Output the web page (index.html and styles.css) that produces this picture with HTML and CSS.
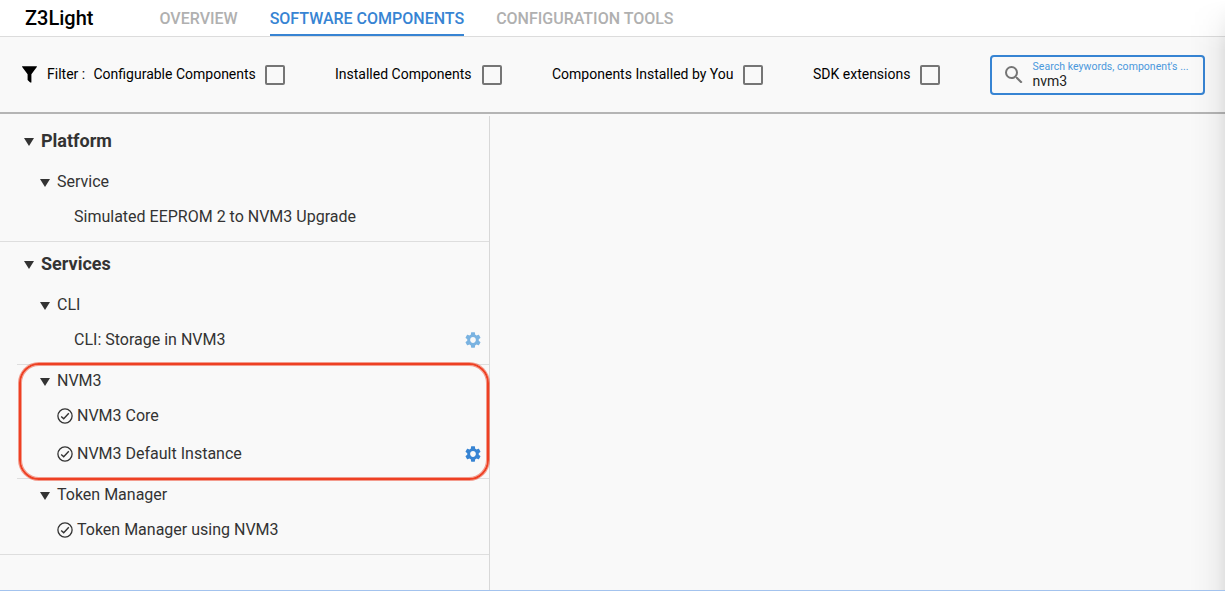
FILE: index.html
```html
<!DOCTYPE html>
<html lang="en">
<head>
<meta charset="utf-8">
<title>Z3Light</title>
<link rel="stylesheet" href="styles.css">
</head>
<body>
<svg class="defs" width="0" height="0" aria-hidden="true">
  <symbol id="gear" viewBox="2 2 20 20"><path d="M19.14 12.94c.04-.3.06-.61.06-.94 0-.32-.02-.64-.07-.94l2.03-1.58c.18-.14.23-.41.12-.61l-1.92-3.32c-.12-.22-.37-.29-.59-.22l-2.39.96c-.5-.38-1.03-.7-1.62-.94l-.36-2.54c-.04-.24-.24-.41-.48-.41h-3.84c-.24 0-.43.17-.47.41l-.36 2.54c-.59.24-1.13.57-1.62.94l-2.39-.96c-.22-.08-.47 0-.59.22L2.74 8.87c-.12.21-.08.47.12.61l2.03 1.58c-.05.3-.09.63-.09.94s.02.64.07.94l-2.03 1.58c-.18.14-.23.41-.12.61l1.92 3.32c.12.22.37.29.59.22l2.39-.96c.5.38 1.03.7 1.62.94l.36 2.54c.05.24.24.41.48.41h3.84c.24 0 .44-.17.47-.41l.36-2.54c.59-.24 1.13-.56 1.62-.94l2.39.96c.22.08.47 0 .59-.22l1.92-3.32c.12-.22.07-.47-.12-.61l-2.01-1.58zM12 15.6c-1.98 0-3.6-1.62-3.6-3.6s1.62-3.6 3.6-3.6 3.6 1.62 3.6 3.6-1.62 3.6-3.6 3.6z"/></symbol>
  <symbol id="check" viewBox="0 0 16 16"><circle cx="8" cy="8" r="7.1" fill="none" stroke="currentColor" stroke-width="1.3"/><path d="M4.2 8.4l2.5 2.4 5.1-5.5" fill="none" stroke="currentColor" stroke-width="1.4"/></symbol>
  <symbol id="caret" viewBox="0 0 10 8"><path d="M0 0h10L5 8z"/></symbol>
</svg>
<div class="app">
  <header class="header">
    <h1 class="title">Z3Light</h1>
    <nav class="tabs">
      <a class="tab">OVERVIEW</a>
      <a class="tab active">SOFTWARE COMPONENTS</a>
      <a class="tab">CONFIGURATION TOOLS</a>
    </nav>
  </header>
  <section class="toolbar">
    <svg class="funnel" viewBox="0 0 15 17"><path d="M.4.3h14.2c.4 0 .4.5.2.8L9.4 8.2v8.2H8.2L5.6 14V8.2L.2 1.100C0 .8 0 .3.400.300z"/></svg>
    <span class="filter-label">Filter :</span>
    <label class="option"><span class="w-configurable">Configurable Components</span><i class="box"></i></label>
    <label class="option"><span class="w-installed">Installed Components</span><i class="box"></i></label>
    <label class="option"><span class="w-by-you">Components Installed by You</span><i class="box"></i></label>
    <label class="option"><span class="w-sdk">SDK extensions</span><i class="box"></i></label>
    <div class="search">
      <svg class="magnifier" viewBox="3 3 17.500 17.500"><path d="M15.5 14h-.79l-.28-.27A6.471 6.471 0 0 0 16 9.500 6.500 6.500 0 1 0 9.500 16c1.610 0 3.090-.590 4.230-1.570l.270.280v.790l5 4.990L20.490 19l-4.990-5zm-6 0C7.010 14 5 11.990 5 9.500S7.010 5 9.500 5 14 7.010 14 9.500 11.990 14 9.500 14z"/></svg>
      <div class="field">
        <span class="hint">Search keywords, component's ...</span>
        <span class="value">nvm3</span>
      </div>
    </div>
  </section>
  <main class="content">
    <aside class="tree">
      <section class="category">
        <h2 class="heading"><svg class="caret"><use href="#caret"/></svg><span>Platform</span></h2>
        <div class="group">
          <div class="group-name"><svg class="caret"><use href="#caret"/></svg><span>Service</span></div>
          <div class="item plain"><span>Simulated EEPROM 2 to NVM3 Upgrade</span></div>
        </div>
      </section>
      <section class="category">
        <h2 class="heading"><svg class="caret"><use href="#caret"/></svg><span>Services</span></h2>
        <div class="group">
          <div class="group-name"><svg class="caret"><use href="#caret"/></svg><span>CLI</span></div>
          <div class="item plain"><span>CLI: Storage in NVM3</span><svg class="gear faded"><use href="#gear"/></svg></div>
        </div>
        <div class="group marked">
          <div class="group-name"><svg class="caret"><use href="#caret"/></svg><span>NVM3</span></div>
          <div class="item"><svg class="check"><use href="#check"/></svg><span>NVM3 Core</span></div>
          <div class="item"><svg class="check"><use href="#check"/></svg><span>NVM3 Default Instance</span><svg class="gear"><use href="#gear"/></svg></div>
        </div>
        <div class="group">
          <div class="group-name"><svg class="caret"><use href="#caret"/></svg><span>Token Manager</span></div>
          <div class="item"><svg class="check"><use href="#check"/></svg><span>Token Manager using NVM3</span></div>
        </div>
      </section>
    </aside>
  </main>
  <div class="edge-shade"></div>
</div>
</body>
</html>
```

FILE: styles.css
```css
* { box-sizing: border-box; }
body {
  margin: 0;
  font-family: Roboto, "Liberation Sans", sans-serif;
  color: #333;
  overflow: hidden;
}
svg { display: block; fill: currentColor; flex: none; }
.defs { position: absolute; }
.app {
  position: relative;
  display: flex;
  flex-direction: column;
  height: 591px;
  background: #f9f9f9;
  border-bottom: 1px solid #a3c3ee;
}
.header {
  display: flex;
  height: 37px;
  padding-left: 25px;
  background: #fff;
  border-bottom: 1px solid #dcdcdc;
}
.title {
  width: 134.500px;
  margin: 0;
  font-size: 20px;
  font-weight: 500;
  line-height: 37px;
  color: #000;
}
.tabs { display: flex; gap: 32px; }
.tab {
  height: 36px;
  font-size: 16px;
  font-weight: 500;
  line-height: 37px;
  color: #b0b0b0;
  white-space: nowrap;
}
.active { color: #3784d3; border-bottom: 2px solid #3784d3; }
.toolbar {
  display: flex;
  align-items: center;
  height: 77px;
  padding: 0 20px 0 22px;
  border-bottom: 2px solid #b5b5b5;
  font-size: 14px;
  color: #000;
  white-space: nowrap;
}
.funnel { width: 15px; height: 17px; }
.filter-label { width: 46.500px; margin-left: 10px; padding-bottom: 2px; }
.option { display: flex; align-items: center; margin-right: 50px; }
.option span { display: block; padding-bottom: 2px; }
.w-configurable { width: 171.500px; }
.w-installed { width: 147px; }
.w-by-you { width: 191px; }
.w-sdk { width: 107px; }
.box { width: 20px; height: 20px; border: 2px solid #757575; border-radius: 2px; }
.search {
  display: flex;
  align-items: center;
  width: 215px;
  height: 40px;
  padding-left: 13px;
  border: 2px solid #3784d3;
  border-radius: 4px;
}
.magnifier { width: 17.500px; height: 17.500px; color: #757575; }
.field { display: flex; flex-direction: column; padding-left: 10px; }
.hint { font-size: 10.500px; line-height: 14px; letter-spacing: .04px; color: #4a98dc; }
.value { font-size: 14px; line-height: 14px; padding-bottom: 2px; color: #222; }
.content { display: flex; flex: 1; padding-top: 2px; }
.tree { width: 490px; padding-top: 3px; border-right: 1px solid #d8d8d8; }
.tree span { padding-bottom: 2px; }
.category { border-bottom: 1px solid #dedede; }
.heading {
  display: flex;
  align-items: center;
  gap: 7px;
  height: 44px;
  margin: 0 0 3px;
  padding-left: 24px;
  font-size: 18px;
  font-weight: 700;
}
.caret { width: 10px; height: 8px; margin-top: 1px; }
.group { position: relative; margin-left: 17px; padding-bottom: 5px; font-size: 16px; }
.group + .group { border-top: 1px solid #dedede; }
.group-name { display: flex; align-items: center; gap: 7px; height: 32px; padding-left: 23px; }
.item { display: flex; align-items: center; gap: 4px; height: 38px; padding: 0 8px 0 40px; }
.plain { padding-left: 57px; }
.check { width: 16px; height: 16px; }
.gear { width: 16px; height: 16px; margin-left: auto; color: #3784d3; }
.faded { color: #7ab3e1; }
.marked::after {
  content: "";
  position: absolute;
  z-index: 1;
  inset: -2px 0 -2px 2px;
  border: 2px solid #ee4023;
  border-radius: 20px;
  box-shadow: 0 0 0 1px rgba(238, 64, 35, .5), inset 0 0 0 1px rgba(238, 64, 35, .5);
}
.edge-shade {
  position: absolute;
  top: 0;
  right: 0;
  width: 36px;
  height: 100%;
  background: linear-gradient(to right, rgba(0,0,0,0), rgba(0,0,0,.015) 45%, rgba(0,0,0,.045) 78%, rgba(0,0,0,.09));
  -webkit-mask-image: linear-gradient(to bottom, transparent, #000 50px);
  mask-image: linear-gradient(to bottom, transparent, #000 50px);
}
```
